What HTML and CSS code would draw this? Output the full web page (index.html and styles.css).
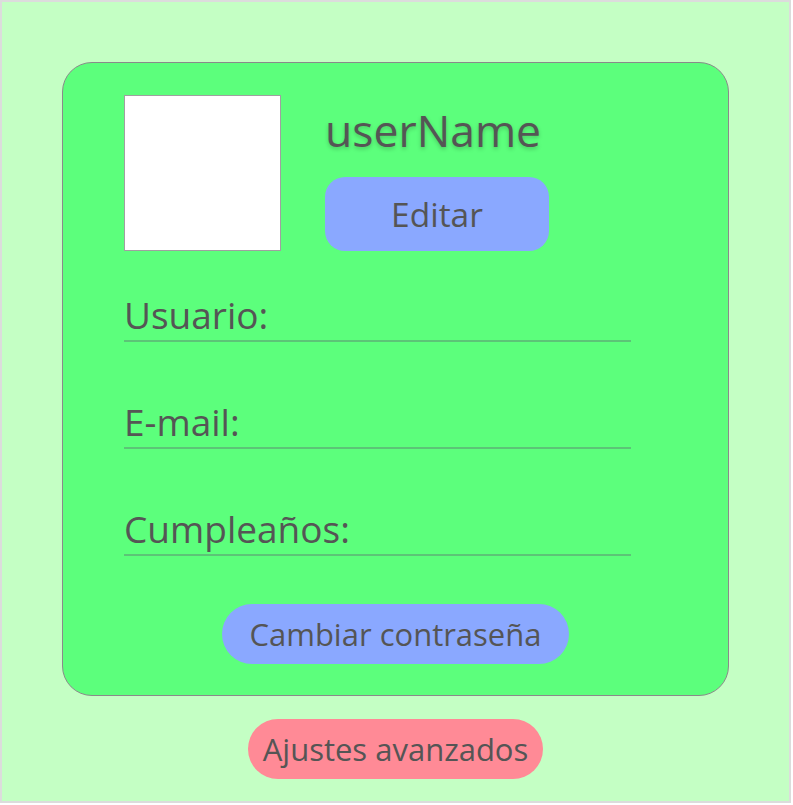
FILE: index.html
```html
<!DOCTYPE html>
<html lang="es">
<head>
<meta charset="utf-8">
<title>Perfil</title>
<link rel="stylesheet" href="styles.css">
</head>
<body>
<div class="frame">
  <div class="card">
    <div class="header">
      <div class="avatar"></div>
      <div class="info">
        <div class="username">userName</div>
        <button class="btn btn-edit">Editar</button>
      </div>
    </div>
    <div class="field">Usuario:</div>
    <div class="field">E-mail:</div>
    <div class="field">Cumpleaños:</div>
    <button class="btn btn-pass">Cambiar contraseña</button>
  </div>
  <button class="btn btn-adv">Ajustes avanzados</button>
</div>
</body>
</html>
```
FILE: styles.css
```css
html, body {
  margin: 0;
  padding: 0;
  background: #ffffff;
}
body {
  font-family: "Open Sans", "Noto Sans", sans-serif;
  color: #555555;
}
.frame {
  box-sizing: border-box;
  width: 791px;
  height: 803px;
  border: 2px solid #dcdcdc;
  background: #c4ffc4;
  padding: 60px 0 0 0;
  display: flex;
  flex-direction: column;
  align-items: center;
}
.card {
  box-sizing: border-box;
  width: 667px;
  height: 634px;
  border: 1px solid #8a8a8a;
  border-radius: 30px;
  background: #5cff7c;
  padding: 32px 0 0 61px;
  display: flex;
  flex-direction: column;
}
.header {
  display: flex;
  align-items: flex-start;
}
.avatar {
  box-sizing: border-box;
  width: 157px;
  height: 156px;
  background: #ffffff;
  border: 1px solid #a0a0a0;
}
.info {
  margin-left: 44px;
  display: flex;
  flex-direction: column;
  align-items: flex-start;
}
.username {
  font-size: 44.5px;
  line-height: 50px;
  height: 50px;
  margin-top: 10px;
  margin-left: 0;
  text-shadow: 0 2px 4px rgba(0, 0, 0, 0.22);
}
.btn {
  font-family: "Open Sans", "Noto Sans", sans-serif;
  color: #555555;
  border: none;
  padding: 0;
  cursor: pointer;
}
.btn-edit {
  margin-top: 22px;
  width: 224px;
  height: 74px;
  border-radius: 20px;
  background: #8aa8ff;
  font-size: 33.5px;
}
.field {
  box-sizing: border-box;
  width: 507px;
  font-size: 37px;
  line-height: 50px;
  border-bottom: 2px solid #5cc477;
  margin-top: 55px;
}
.header + .field {
  margin-top: 39px;
}
.btn-pass {
  align-self: center;
  margin-left: -61px;
  margin-top: 48px;
  width: 347px;
  height: 60px;
  border-radius: 30px;
  background: #8aa8ff;
  font-size: 31px;
}
.btn-adv {
  margin-top: 23px;
  width: 295px;
  height: 60px;
  border-radius: 30px;
  background: #ff8a96;
  font-size: 31px;
}
```
